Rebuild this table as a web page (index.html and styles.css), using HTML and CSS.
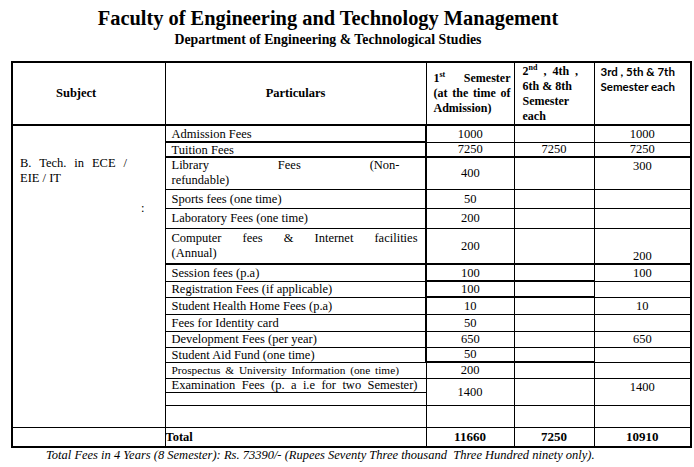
FILE: index.html
```html
<!DOCTYPE html>
<html>
<head>
<meta charset="utf-8">
<link rel="stylesheet" href="styles.css">
</head>
<body>
<div class="head">
  <div class="title">Faculty of Engineering and Technology Management</div>
  <div class="sub">Department of Engineering &amp; Technological Studies</div>
</div>
<table class="fees">
  <colgroup>
    <col class="c1"><col class="c2"><col class="c3"><col class="c4"><col class="c5">
  </colgroup>
  <tr class="r-head">
    <th class="h-subj">Subject</th>
    <th class="h-part">Particulars</th>
    <th class="h-c3">
      <div class="jl">1<sup>st</sup> Semester</div>
      <div class="jl">(at the time of</div>
      <div>Admission)</div>
    </th>
    <th class="h-c4">
      <div class="ws">2<sup>nd</sup> , 4th ,</div>
      <div>6th &amp; 8th</div>
      <div>Semester</div>
      <div>each</div>
    </th>
    <th class="h-c5">
      <div>3rd , 5th &amp; 7th</div>
      <div>Semester each</div>
    </th>
  </tr>
  <tr class="h17">
    <td class="subj" rowspan="16">
      <div class="subj-l1">B. Tech. in ECE /</div>
      <div>EIE / IT</div>
      <div>&nbsp;</div>
      <div class="colon">:</div>
    </td>
    <td class="part thick-b">Admission Fees</td>
    <td class="num thick-l">1000</td><td class="num"></td><td class="num">1000</td>
  </tr>
  <tr class="h15">
    <td class="part thick-b">Tuition Fees</td>
    <td class="num thick-l thick-b">7250</td><td class="num thick-b">7250</td><td class="num thick-b">7250</td>
  </tr>
  <tr class="h32">
    <td class="part two"><div class="jl w228">Library Fees (Non-</div>refundable)</td>
    <td class="num thick-l">400</td><td class="num"></td><td class="num top">300</td>
  </tr>
  <tr class="h19">
    <td class="part">Sports fees (one time)</td>
    <td class="num thick-l">50</td><td class="num"></td><td class="num"></td>
  </tr>
  <tr class="h20">
    <td class="part">Laboratory Fees (one time)</td>
    <td class="num thick-l">200</td><td class="num"></td><td class="num"></td>
  </tr>
  <tr class="h36">
    <td class="part two thick-b"><div class="jl w246">Computer fees &amp; Internet facilities</div>(Annual)</td>
    <td class="num thick-l thick-b">200</td><td class="num thick-b"></td><td class="num bottom thick-b">200</td>
  </tr>
  <tr class="h17">
    <td class="part">Session fees (p.a)</td>
    <td class="num thick-l thick-b">100</td><td class="num thick-b"></td><td class="num">100</td>
  </tr>
  <tr class="h16">
    <td class="part">Registration Fees (if applicable)</td>
    <td class="num thick-l thick-b">100</td><td class="num thick-b"></td><td class="num"></td>
  </tr>
  <tr class="h17">
    <td class="part">Student Health Home Fees (p.a)</td>
    <td class="num thick-l">10</td><td class="num"></td><td class="num">10</td>
  </tr>
  <tr class="h17">
    <td class="part">Fees for Identity card</td>
    <td class="num thick-l">50</td><td class="num"></td><td class="num"></td>
  </tr>
  <tr class="h16">
    <td class="part">Development Fees (per year)</td>
    <td class="num thick-l">650</td><td class="num"></td><td class="num">650</td>
  </tr>
  <tr class="h15">
    <td class="part">Student Aid Fund (one time)</td>
    <td class="num thick-l thick-b">50</td><td class="num thick-b"></td><td class="num"></td>
  </tr>
  <tr class="h16">
    <td class="part small">Prospectus &amp; University Information (one time)</td>
    <td class="num">200</td><td class="num"></td><td class="num"></td>
  </tr>
  <tr class="h14">
    <td class="part"><div class="jl w246">Examination Fees (p. a i.e for two Semester)</div></td>
    <td class="num" rowspan="2">1400</td><td class="num" rowspan="2"></td><td class="num top" rowspan="2">1400</td>
  </tr>
  <tr class="h13">
    <td class="part"></td>
  </tr>
  <tr class="h22">
    <td class="part"></td>
    <td class="num"></td><td class="num"></td><td class="num"></td>
  </tr>
  <tr class="r-total">
    <td class="subj-total"></td>
    <td class="total-lbl">Total</td>
    <td class="num bold">11660</td><td class="num bold">7250</td><td class="num bold">10910</td>
  </tr>
</table>
<p class="foot">Total Fees in 4 Years (8 Semester): Rs. 73390/- (Rupees Seventy Three thousand &nbsp;Three Hundred ninety only).</p>
</body>
</html>
```

FILE: styles.css
```css
body {
  margin: 0;
  background: #fff;
  color: #000;
  font-family: "Liberation Serif", "Times New Roman", serif;
}
.head {
  width: 656px;
  text-align: center;
  padding-top: 6px;
}
.title {
  font-size: 20.4px;
  font-weight: bold;
  line-height: 24px;
}
.sub {
  font-size: 13.8px;
  font-weight: bold;
  line-height: 16px;
  margin-top: 2px;
}
.fees {
  margin-left: 11px;
  margin-top: 13px;
  border-collapse: collapse;
  table-layout: fixed;
  width: 679px;
  border: 2px solid #000;
}
.c1 { width: 153px; }
.c2 { width: 261px; }
.c3 { width: 88px; }
.c4 { width: 80px; }
.c5 { width: 97px; }
th, td {
  border: 1px solid #000;
  padding: 0 6px;
  font-size: 12.5px;
  line-height: 12px;
  font-weight: normal;
}
.r-head { height: 63px; }
.r-head th {
  font-weight: bold;
  border-bottom: 2px solid #000;
  text-align: left;
  line-height: 15px;
}
.h-subj { padding-left: 43px; }
.h-part { text-align: center !important; }
.r-head .h-c3 { padding: 0 3px 0 7px; vertical-align: middle; font-size: 12px; }
.r-head .h-c4 { padding: 1px 4px 0 8px; vertical-align: top; font-size: 12px; }
.r-head .h-c5 {
  padding: 1px 4px 0 6px;
  vertical-align: top;
  font-family: Lato, "Liberation Sans", sans-serif;
  font-size: 11.5px;
}
sup { font-size: 8px; line-height: 0; vertical-align: 5px; }
.jl { text-align: justify; text-align-last: justify; }
.ws { word-spacing: 3px; }
.w228 { width: 228px; }
.w246 { width: 246px; }
.h13 { height: 13px; }
.h14 { height: 14px; }
.h15 { height: 15px; }
.h16 { height: 16px; }
.h17 { height: 17px; }
.h19 { height: 19px; }
.h20 { height: 20px; }
.h22 { height: 22px; }
.h32 { height: 32px; }
.h36 { height: 36px; }
.subj {
  vertical-align: top;
  padding: 30px 6px 0 7px;
  border-left: 2px solid #000;
  line-height: 15px;
}
.subj-l1 { width: 107px; text-align: justify; text-align-last: justify; }
.colon { padding-left: 121px; }
.part { text-align: left; vertical-align: middle; padding-left: 6px; }
.part.two { line-height: 15px; }
.small { font-size: 11.3px; word-spacing: 2px; }
.num { text-align: center; vertical-align: middle; }
.top { vertical-align: top; padding-top: 2px; }
.bottom { vertical-align: bottom; padding-bottom: 1px; }
.thick-l { border-left: 2px solid #000; }
.thick-b { border-bottom: 2px solid #000; }
.r-total { height: 20px; }
.subj-total { border-left: 1px solid #000; }
.total-lbl {
  font-weight: bold;
  padding: 3px 0 0 0;
  vertical-align: top;
}
.bold { font-weight: bold; font-size: 13px; }
.foot {
  margin: 0 0 0 46px;
  font-style: italic;
  font-size: 12.5px;
  line-height: 14px;
}
```
